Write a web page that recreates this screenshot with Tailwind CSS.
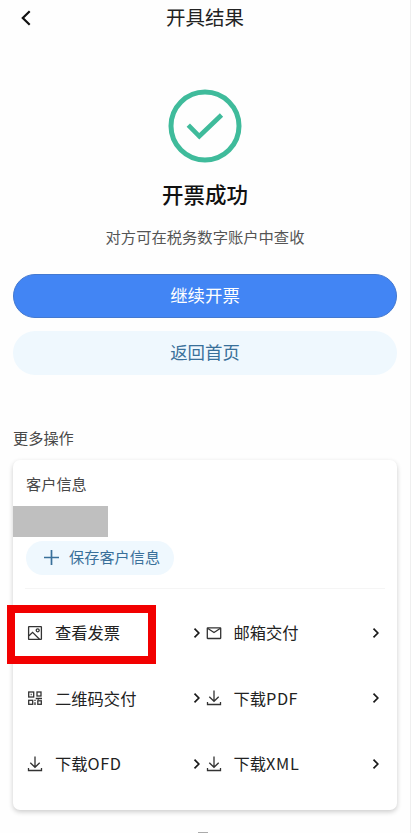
<!DOCTYPE html>
<html lang="zh-CN">
<head>
<meta charset="utf-8">
<title>开具结果</title>
<script src="https://cdn.jsdelivr.net/npm/@tailwindcss/browser@4"></script>
</head>
<body class="bg-white">
<svg class="hidden">
  <symbol id="chev" viewBox="0 0 8 12"><path d="M1.500 1.700 5.800 6l-4.300 4.300" fill="none" stroke="#1a1a1a" stroke-width="1.700"/></symbol>
  <symbol id="down" viewBox="0 0 16 16"><path d="M8 .5v10.500M3.300 6.700 8 11.300l4.700-4.600M1.500 12v2.500h13v-2.500" fill="none" stroke="#333" stroke-width="1.300"/></symbol>
</svg>
<main class="relative flex h-[833px] w-[411px] flex-col overflow-hidden border-r border-[#efefef] bg-[#fefefe] font-['Noto_Sans_CJK_SC',sans-serif] text-[#222]">
  <header class="grid h-9 shrink-0 grid-cols-[40px_1fr_40px] items-center">
    <svg class="ml-[20px] h-4 w-3" viewBox="0 0 12 16" fill="none" stroke="#111" stroke-width="2.200"><path d="M9.700 1.300 2.800 8l6.900 6.700"/></svg>
    <h1 class="-mt-[2px] text-center text-[19.500px] leading-9">开具结果</h1>
  </header>

  <section class="flex shrink-0 flex-col items-center pt-[53px]">
    <svg class="h-[74px] w-[74px]" viewBox="0 0 74 74" fill="none" stroke="#3fbb9b"><circle cx="37" cy="37" r="34" stroke-width="5"/><path d="M20.300 36.200 31.300 47.300 53.500 26" stroke-width="4.700"/></svg>
    <h2 class="mt-[15px] text-[21.500px] font-medium leading-8 text-[#111]">开票成功</h2>
    <p class="mt-[14px] text-[15.300px] leading-6 text-[#555]">对方可在税务数字账户中查收</p>
  </section>

  <section class="mt-[26px] flex shrink-0 flex-col gap-[13px] pl-[13px] pr-[13px]">
    <button class="h-11 rounded-full border border-[#4479d0] bg-[#4285f4] pb-[2px] text-[17.400px] leading-none text-white">继续开票</button>
    <button class="h-11 rounded-full bg-[#eff8fe] pb-[2px] text-[17.400px] leading-none text-[#39709a]">返回首页</button>
  </section>

  <h3 class="mt-[50px] shrink-0 pl-[13px] text-[15.200px] leading-6 text-[#484848]">更多操作</h3>

  <section class="mx-[13px] mt-[11px] flex h-[350px] shrink-0 flex-col rounded-[7px] bg-white shadow-[0_2px_5px_rgba(0,0,0,0.2)]">
    <h4 class="mt-[11px] pl-[13px] text-[15.200px] leading-6 text-[#484848]">客户信息</h4>
    <div class="mt-[11px] h-[31px] w-[95px] bg-[#bfbfbf]"></div>
    <button class="ml-[13px] mt-[4px] flex h-[34px] w-[148px] items-center rounded-full bg-[#eff8fe] pb-[2px] pl-[18px] text-[15.200px] leading-none text-[#39709a]">
      <svg class="mr-[10px] h-[15px] w-[15px]" viewBox="0 0 15 15" stroke="#39709a" stroke-width="1.700"><path d="M7.500 0v15M0 7.500h15"/></svg>保存客户信息
    </button>
    <div class="mx-3 mt-[13px] h-px bg-[#f5f5f5]"></div>
    <div class="mt-[11px] grid grid-cols-[178.500px_1fr] auto-rows-[65.500px] pl-[14px] pr-[17px] text-[16.300px] leading-none">
      <div class="flex items-center">
        <svg class="mr-[12px] h-4 w-4" viewBox="0 0 16 16" fill="none" stroke="#333" stroke-width="1.300"><rect x="1.600" y="1.600" width="12.800" height="12.800" rx=".5"/><circle cx="10.700" cy="5.300" r="1.500"/><path d="m2 10.800 3.600-3.500 6.900 6.900"/></svg>
        <span class="-mt-px flex-1">查看发票</span>
        <svg class="mr-[4.500px] h-3 w-2"><use href="#chev"/></svg>
      </div>
      <div class="flex items-center">
        <svg class="mr-[12px] h-4 w-4" viewBox="0 0 16 16" fill="none" stroke="#333" stroke-width="1.300"><rect x="1.300" y="2.800" width="13.400" height="10.700" rx=".4"/><path d="m1.500 3.300 6.500 4.200 6.500-4.200"/></svg>
        <span class="-mt-px flex-1">邮箱交付</span>
        <svg class="h-3 w-2"><use href="#chev"/></svg>
      </div>
      <div class="flex items-center">
        <svg class="mr-[12px] h-4 w-4" viewBox="0 0 16 16" fill="none" stroke="#333" stroke-width="1.300"><rect x="1.700" y="2" width="5" height="5"/><path d="M3.700 4.500h1M10.700 9.300h1"/><rect x="10" y="2" width="4" height="4"/><rect x="1.700" y="10.300" width="4" height="4"/><rect x="10.800" y="10.800" width="3.500" height="3.500"/><path d="M8.700 8.500h6.300M8 9.800v1.300M8 12.300v2.700"/></svg>
        <span class="-mt-px flex-1">二维码交付</span>
        <svg class="mr-[4.500px] h-3 w-2"><use href="#chev"/></svg>
      </div>
      <div class="flex items-center">
        <svg class="mr-[12px] h-4 w-4"><use href="#down"/></svg>
        <span class="-mt-px flex-1">下载<span class="tracking-[.5px]">PDF</span></span>
        <svg class="h-3 w-2"><use href="#chev"/></svg>
      </div>
      <div class="flex items-center">
        <svg class="mr-[12px] h-4 w-4"><use href="#down"/></svg>
        <span class="-mt-px flex-1">下载<span class="tracking-[.6px]">OFD</span></span>
        <svg class="mr-[4.500px] h-3 w-2"><use href="#chev"/></svg>
      </div>
      <div class="flex items-center">
        <svg class="mr-[12px] h-4 w-4"><use href="#down"/></svg>
        <span class="-mt-px flex-1">下载<span class="tracking-[.7px]">XML</span></span>
        <svg class="h-3 w-2"><use href="#chev"/></svg>
      </div>
    </div>
  </section>
  <div class="ml-[198px] mt-[22px] h-px w-[10px] shrink-0 bg-[#aaa]"></div>
  <div class="absolute left-[7px] top-[605px] h-[59px] w-[149px] border-8 border-[#f20000]"></div>
</main>
</body>
</html>
